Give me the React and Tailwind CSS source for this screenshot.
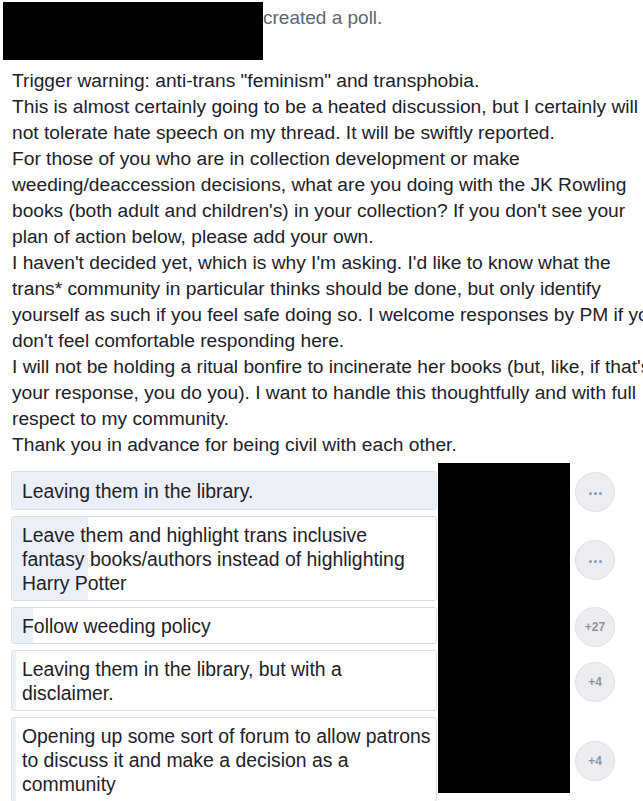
const intro = [
  'Trigger warning: anti-trans "feminism" and transphobia.',
  "This is almost certainly going to be a heated discussion, but I certainly will",
  "not tolerate hate speech on my thread. It will be swiftly reported.",
  "For those of you who are in collection development or make",
  "weeding/deaccession decisions, what are you doing with the JK Rowling",
  "books (both adult and children's) in your collection? If you don't see your",
  "plan of action below, please add your own.",
  "I haven't decided yet, which is why I'm asking. I'd like to know what the",
  "trans* community in particular thinks should be done, but only identify",
  "yourself as such if you feel safe doing so. I welcome responses by PM if you",
  "don't feel comfortable responding here.",
  "I will not be holding a ritual bonfire to incinerate her books (but, like, if that's",
  "your response, you do you). I want to handle this thoughtfully and with full",
  "respect to my community.",
  "Thank you in advance for being civil with each other.",
];

const options = [
  { lines: ["Leaving them in the library."], fill: 426, more: "...", tall: true },
  {
    lines: [
      "Leave them and highlight trans inclusive",
      "fantasy books/authors instead of highlighting",
      "Harry Potter",
    ],
    fill: 76,
    more: "...",
  },
  { lines: ["Follow weeding policy"], fill: 21, more: "+27" },
  { lines: ["Leaving them in the library, but with a", "disclaimer."], fill: 4, more: "+4" },
  {
    lines: [
      "Opening up some sort of forum to allow patrons",
      "to discuss it and make a decision as a",
      "community",
    ],
    fill: 4,
    more: "+4",
  },
];

function PollOption({ option }) {
  return (
    <div className="flex items-center">
      <div className="relative w-[426px] border border-[#dadde1] rounded-[3px] bg-white overflow-hidden">
        <div
          className="absolute left-0 top-0 bottom-0 bg-[#ebf0f8]"
          style={{ width: option.fill }}
        />
        <div
          className={
            "relative pl-[10px] text-[19.4px] leading-[24px] text-[#1d2129] " +
            (option.tall ? "pt-[7px] pb-[6px]" : "pt-[6px] pb-[5px]")
          }
        >
          {option.lines.map((l) => (
            <div key={l} className="whitespace-nowrap">{l}</div>
          ))}
        </div>
      </div>
      <div className="h-0 flex items-center ml-[138px]">
        <div className="translate-y-[1px] w-[40px] h-[40px] rounded-full bg-[#ebedf0] border border-[#dddfe2] flex items-center justify-center">
          {option.more === "..." ? (
            <div className="flex gap-[2px] mt-[3px]">
              <span className="w-[3px] h-[3px] rounded-full bg-[#8a9bc4]" />
              <span className="w-[3px] h-[3px] rounded-full bg-[#8a9bc4]" />
              <span className="w-[3px] h-[3px] rounded-full bg-[#8a9bc4]" />
            </div>
          ) : (
            <span className="text-[12px] font-bold text-[#90949c]">{option.more}</span>
          )}
        </div>
      </div>
    </div>
  );
}

export default function App() {
  return (
    <div className="relative w-[643px] h-[801px] overflow-hidden bg-white font-['Liberation_Sans',Arial,sans-serif]">
      <div className="flex items-start pt-[2px] pl-[3px]">
        <div className="w-[260px] h-[58px] bg-black" />
        <span className="mt-[5px] text-[19px] leading-[22px] text-[#606770]">created a poll.</span>
      </div>

      <div className="pl-[12px] mt-[8px] text-[19.2px] leading-[26px] text-[#1d2129]">
        {intro.map((l) => (
          <div key={l} className="whitespace-nowrap">{l}</div>
        ))}
      </div>

      <div className="pl-[11px] mt-[13px] flex flex-col gap-[6px]">
        {options.map((o, i) => (
          <PollOption key={i} option={o} />
        ))}
      </div>

      <div className="absolute left-[438px] top-[463px] w-[132px] h-[330px] bg-black" />
    </div>
  );
}
